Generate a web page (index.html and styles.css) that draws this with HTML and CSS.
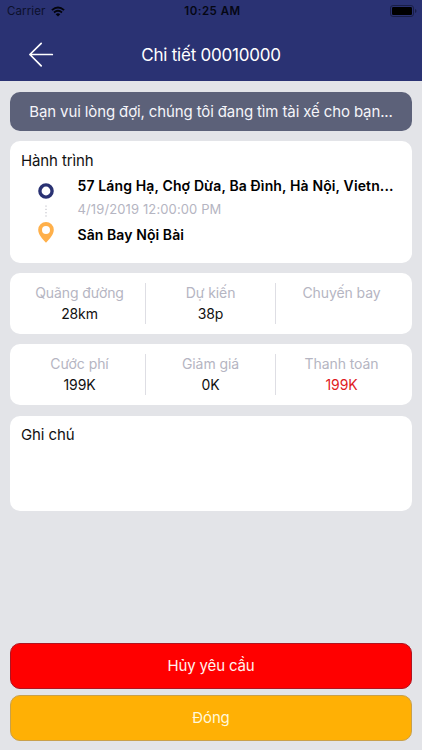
FILE: index.html
```html
<!DOCTYPE html>
<html lang="vi">
<head>
<meta charset="utf-8">
<title>Chi tiết 00010000</title>
<link rel="stylesheet" href="styles.css">
</head>
<body>
<div class="screen">
  <header class="header">
    <div class="status">
      <div class="carrier"><span>Carrier</span>
        <svg class="wifi" width="14" height="11" viewBox="0 0 14 11"><path d="M0.9 4.1Q7-1.3 13.1 4.1" fill="none" stroke="currentColor" stroke-width="1.9"/><path d="M3 6.5Q7 3 11 6.5" fill="none" stroke="currentColor" stroke-width="1.8"/><path d="M4.7 8.2Q7 6.2 9.3 8.2L7 10.4Z" fill="currentColor"/></svg>
      </div>
      <div class="clock">10:25 AM</div>
      <svg class="battery" width="27" height="12" viewBox="0 0 27 12"><rect x="0.5" y="0.5" width="23" height="11" rx="2.6" fill="none" stroke="#191e46"/><rect x="2" y="2" width="20" height="8" rx="1.2" fill="#000"/><path d="M25 4Q26.5 4.5 26.5 6T25 8Z" fill="#191e46"/></svg>
    </div>
    <div class="nav">
      <svg class="back" width="26" height="26" viewBox="0 0 26 26" fill="none" stroke="#fff" stroke-width="1.7" stroke-linecap="round" stroke-linejoin="round"><path d="M13.200 1.300L1.900 12.500l11.300 11.300M1.900 12.500H24.300"/></svg>
      <h1 class="title">Chi tiết 00010000</h1>
    </div>
  </header>
  <main class="content">
    <div class="banner"><span>Bạn vui lòng đợi, chúng tôi đang tìm tài xế cho bạn...</span></div>
    <section class="card trip">
      <h2 class="heading">Hành trình</h2>
      <div class="route">
        <svg class="marks" width="16" height="60" viewBox="0 0 16 60"><circle cx="8" cy="8" r="6.1" fill="#fff" stroke="#2a3273" stroke-width="3.4"/><path d="M8 22.5V34" stroke="#b7b7bf" stroke-width="1" stroke-dasharray="1.2 2.1"/><path fill-rule="evenodd" d="M8 39a7.8 7.8 0 0 0-7.8 7.8C.2 51.8 4.4 55.700 8 59.700c3.600-4 7.800-7.900 7.800-12.900A7.800 7.800 0 0 0 8 39Zm0 4a4 4 0 1 1 0 8a4 4 0 0 1 0-8Z" fill="#ffb04a"/></svg>
        <div class="stops">
          <div class="place from">57 Láng Hạ, Chợ Dừa, Ba Đình, Hà Nội, Vietn...</div>
          <div class="date">4/19/2019 12:00:00 PM</div>
          <div class="place to">Sân Bay Nội Bài</div>
        </div>
      </div>
    </section>
    <section class="card stats">
      <div class="stat"><span class="label">Quãng đường</span><span class="value">28km</span></div>
      <div class="stat"><span class="label">Dự kiến</span><span class="value">38p</span></div>
      <div class="stat"><span class="label">Chuyến bay</span></div>
    </section>
    <section class="card stats">
      <div class="stat"><span class="label">Cước phí</span><span class="value">199K</span></div>
      <div class="stat"><span class="label">Giảm giá</span><span class="value">0K</span></div>
      <div class="stat"><span class="label">Thanh toán</span><span class="value total">199K</span></div>
    </section>
    <section class="card note"><h2 class="heading">Ghi chú</h2></section>
    <div class="actions">
      <button class="button cancel">Hủy yêu cầu</button>
      <button class="button close">Đóng</button>
    </div>
  </main>
</div>
</body>
</html>
```
FILE: styles.css
```css
* { box-sizing: border-box; }
body { margin: 0; font-family: Inter, "Liberation Sans", sans-serif; color: #111; }
svg { display: block; flex: none; }
h1, h2 { margin: 0; font-weight: 400; }
.screen { width: 422px; height: 750px; display: flex; flex-direction: column; background: #e3e4e8; overflow: hidden; }
.header { height: 81px; flex: none; background: #2a3273; }
.status { height: 22px; display: grid; grid-template-columns: 1fr auto 1fr; align-items: center; padding: 0 5px 0 7px; color: #050713; }
.carrier { display: flex; align-items: center; gap: 6px; font-size: 11.500px; letter-spacing: 0.1px; color: #0c102b; }
.wifi { color: #03040c; }
.clock { font-size: 11.500px; font-weight: 600; letter-spacing: 0.5px; padding-left: 1px; }
.battery { justify-self: end; }
.nav { height: 65px; display: grid; grid-template-columns: 56px 1fr 56px; align-items: center; }
.back { margin-left: 28px; }
.title { text-align: center; color: #fff; font-size: 17px; letter-spacing: -0.22px; line-height: 24px; white-space: nowrap; }
.content { flex: 1; display: flex; flex-direction: column; padding: 11px 10px 9px; gap: 10px; }
.banner { height: 39px; flex: none; border-radius: 10px; background: #5c6179; color: #f5f5fa; display: flex; justify-content: center; align-items: center; font-size: 15px; letter-spacing: -0.12px; white-space: nowrap; }
.card { flex: none; background: #fff; border-radius: 10px; }
.trip { height: 122px; padding: 10px 11px; }
.heading { font-size: 15px; letter-spacing: -0.12px; line-height: 20px; }
.route { display: flex; padding: 3px 0 0 16.500px; }
.marks { margin-top: 9px; }
.stops { margin-left: 24px; white-space: nowrap; }
.place { font-size: 14px; font-weight: 600; letter-spacing: 0.13px; line-height: 22px; color: #000; }
.from { margin-top: 1px; }
.date { font-size: 13px; letter-spacing: 0.12px; line-height: 22px; margin-top: 1px; color: #b5b5c2; }
.to { margin-top: 4px; letter-spacing: 0.08px; }
.stats { height: 61px; padding: 10px 6px 10px 4px; display: grid; grid-template-columns: 131px 130px 1fr; }
.stat { display: flex; flex-direction: column; align-items: center; white-space: nowrap; }
.stat + .stat { border-left: 1px solid #dedee4; }
.stat:last-child { padding-left: 1px; }
.label { font-size: 14px; letter-spacing: -0.08px; line-height: 20px; color: #b5b5c2; }
.value { font-size: 14px; letter-spacing: -0.1px; line-height: 21px; color: #111; }
.total { color: #e01b22; }
.note { height: 95px; margin-top: 1px; padding: 9px 11px; }
.actions { margin-top: auto; display: flex; flex-direction: column; gap: 6px; }
.button { height: 46px; padding: 0 0 1px; border-radius: 10px; font: 400 15px Inter, "Liberation Sans", sans-serif; letter-spacing: -0.15px; color: #fff3ee; }
.cancel { background: #ff0000; border: 1px solid #b01420; }
.close { background: #ffb005; border: 1px solid #c9a04a; color: #fff8dc; }
```
